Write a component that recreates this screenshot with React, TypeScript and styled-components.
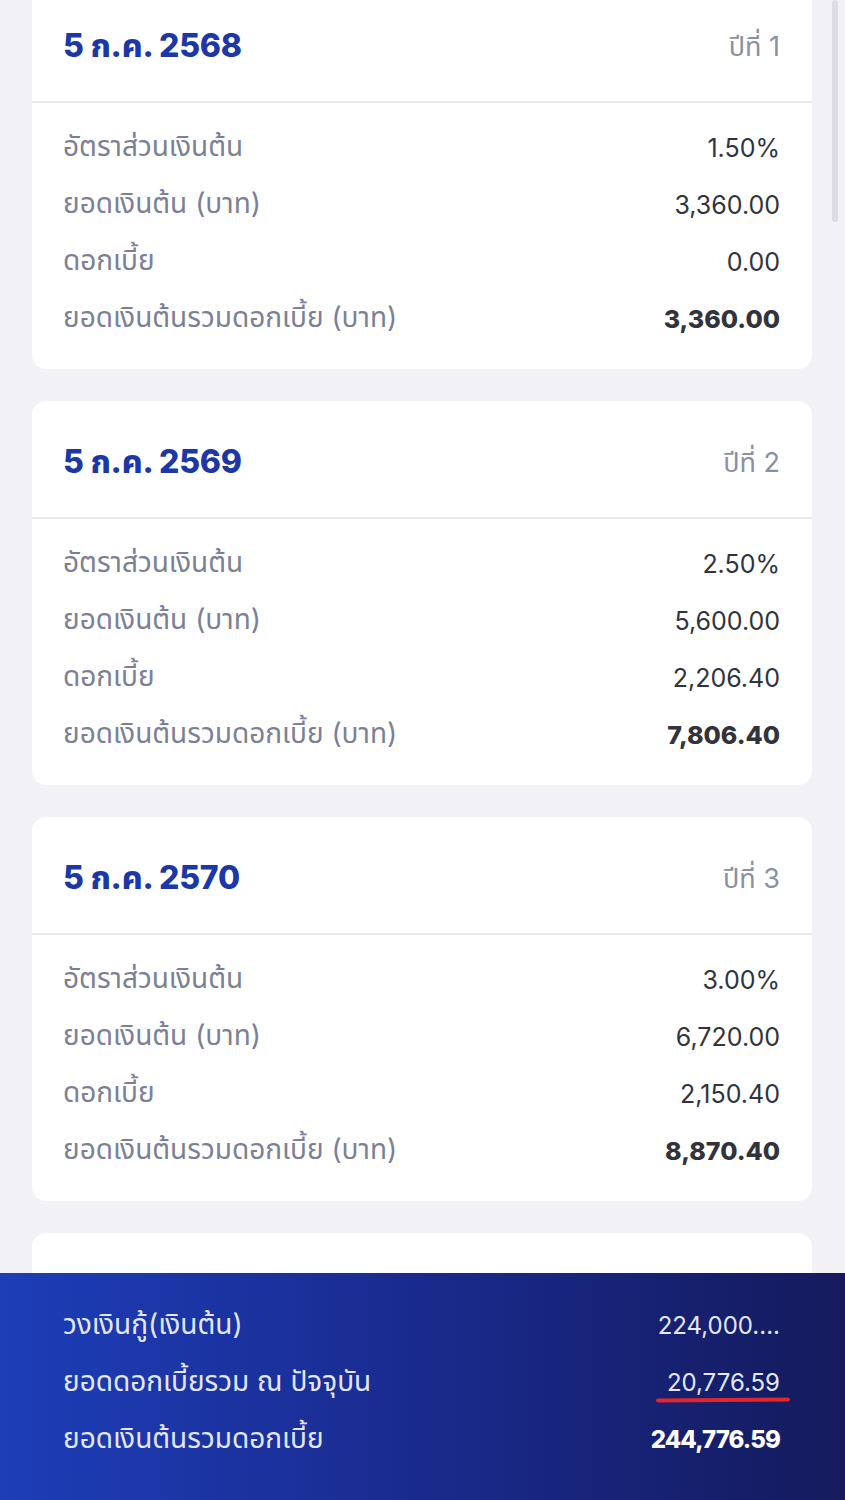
import React from "react";
import styled, { createGlobalStyle } from "styled-components";

const GlobalStyle = createGlobalStyle`
  html, body {
    margin: 0;
    padding: 0;
    background: #f1f1f6;
  }
  body {
    font-family: Inter, "Noto Sans Thai", "Noto Sans Thai UI", "Noto Sans", sans-serif;
  }
`;

type Row = { label: string; value: string };
type Year = { date: string; year: number; rate: string; principal: string; interest: string; total: string };

const years: Year[] = [
  { date: "5 ก.ค. 2568", year: 1, rate: "1.50%", principal: "3,360.00", interest: "0.00", total: "3,360.00" },
  { date: "5 ก.ค. 2569", year: 2, rate: "2.50%", principal: "5,600.00", interest: "2,206.40", total: "7,806.40" },
  { date: "5 ก.ค. 2570", year: 3, rate: "3.00%", principal: "6,720.00", interest: "2,150.40", total: "8,870.40" },
];

const Page = styled.div`
  position: relative;
  height: 1500px;
  overflow: hidden;
`;

const List = styled.div`
  display: flex;
  flex-direction: column;
  gap: 32px;
  padding: 0 33px 0 32px;
  margin-top: -15px;
`;

const Card = styled.section`
  background: #ffffff;
  border-radius: 14px;
  overflow: hidden;
`;

const CardHeader = styled.header`
  height: 118px;
  box-sizing: border-box;
  display: flex;
  align-items: center;
  justify-content: space-between;
  padding: 8px 32px 0 31px;
  border-bottom: 2px solid #e7e8ee;
`;

const DateTitle = styled.h2`
  margin: 0;
  font-size: 32px;
  font-weight: 800;
  color: #1d37a6;
  letter-spacing: -0.2px;
`;

const YearTag = styled.span`
  font-size: 27px;
  color: #8b8fa2;
`;

const CardBody = styled.div`
  padding: 16px 32px 22px 31px;
`;

const DataRow = styled.div`
  height: 57px;
  display: flex;
  align-items: center;
  justify-content: space-between;
`;

const Label = styled.span<{ $light?: boolean }>`
  font-size: 28px;
  color: ${(p) => (p.$light ? "#e3e7ff" : "#7c8096")};
`;

const Value = styled.span<{ $bold?: boolean; $light?: boolean }>`
  position: relative;
  font-size: ${(p) => (p.$light ? "24px" : "25px")};
  color: ${(p) => (p.$light ? (p.$bold ? "#ffffff" : "#e3e7ff") : "#32333c")};
  font-weight: ${(p) => (p.$bold ? 800 : 400)};
  letter-spacing: ${(p) => (p.$bold && p.$light ? "-0.9px" : "0")};
`;

const Marked = styled(Value)`
  &::after {
    content: "";
    position: absolute;
    left: -11px;
    right: -10px;
    bottom: -5px;
    height: 4px;
    border-radius: 3px;
    background: #e3262c;
    transform: rotate(-0.4deg);
  }
`;

const EmptyCard = styled(Card)`
  height: 120px;
`;

const Summary = styled.footer`
  position: fixed;
  left: 0;
  right: 0;
  bottom: 0;
  height: 227px;
  box-sizing: border-box;
  padding: 24px 65px 0 63px;
  background: linear-gradient(90deg, #1d3eb8 0%, #1a2c92 45%, #141a5c 100%);
`;

const ScrollThumb = styled.div`
  position: absolute;
  top: 0;
  right: 7px;
  width: 6px;
  height: 222px;
  border-radius: 3px;
  background: #dcdce3;
`;

const YearCard = ({ y }: { y: Year }) => {
  const rows: (Row & { bold?: boolean })[] = [
    { label: "อัตราส่วนเงินต้น", value: y.rate },
    { label: "ยอดเงินต้น (บาท)", value: y.principal },
    { label: "ดอกเบี้ย", value: y.interest },
    { label: "ยอดเงินต้นรวมดอกเบี้ย (บาท)", value: y.total, bold: true },
  ];
  return (
    <Card>
      <CardHeader>
        <DateTitle>{y.date}</DateTitle>
        <YearTag>ปีที่ {y.year}</YearTag>
      </CardHeader>
      <CardBody>
        {rows.map((r) => (
          <DataRow key={r.label}>
            <Label>{r.label}</Label>
            <Value $bold={r.bold}>{r.value}</Value>
          </DataRow>
        ))}
      </CardBody>
    </Card>
  );
};

const App = () => {
  return (
    <Page>
      <GlobalStyle />
      <ScrollThumb />
      <List>
        {years.map((y) => (
          <YearCard key={y.date} y={y} />
        ))}
        <EmptyCard />
      </List>
      <Summary>
        <DataRow>
          <Label $light>วงเงินกู้(เงินต้น)</Label>
          <Value $light>224,000....</Value>
        </DataRow>
        <DataRow>
          <Label $light>ยอดดอกเบี้ยรวม ณ ปัจจุบัน</Label>
          <Marked $light>20,776.59</Marked>
        </DataRow>
        <DataRow>
          <Label $light>ยอดเงินต้นรวมดอกเบี้ย</Label>
          <Value $light $bold>244,776.59</Value>
        </DataRow>
      </Summary>
    </Page>
  );
};

export default App;
